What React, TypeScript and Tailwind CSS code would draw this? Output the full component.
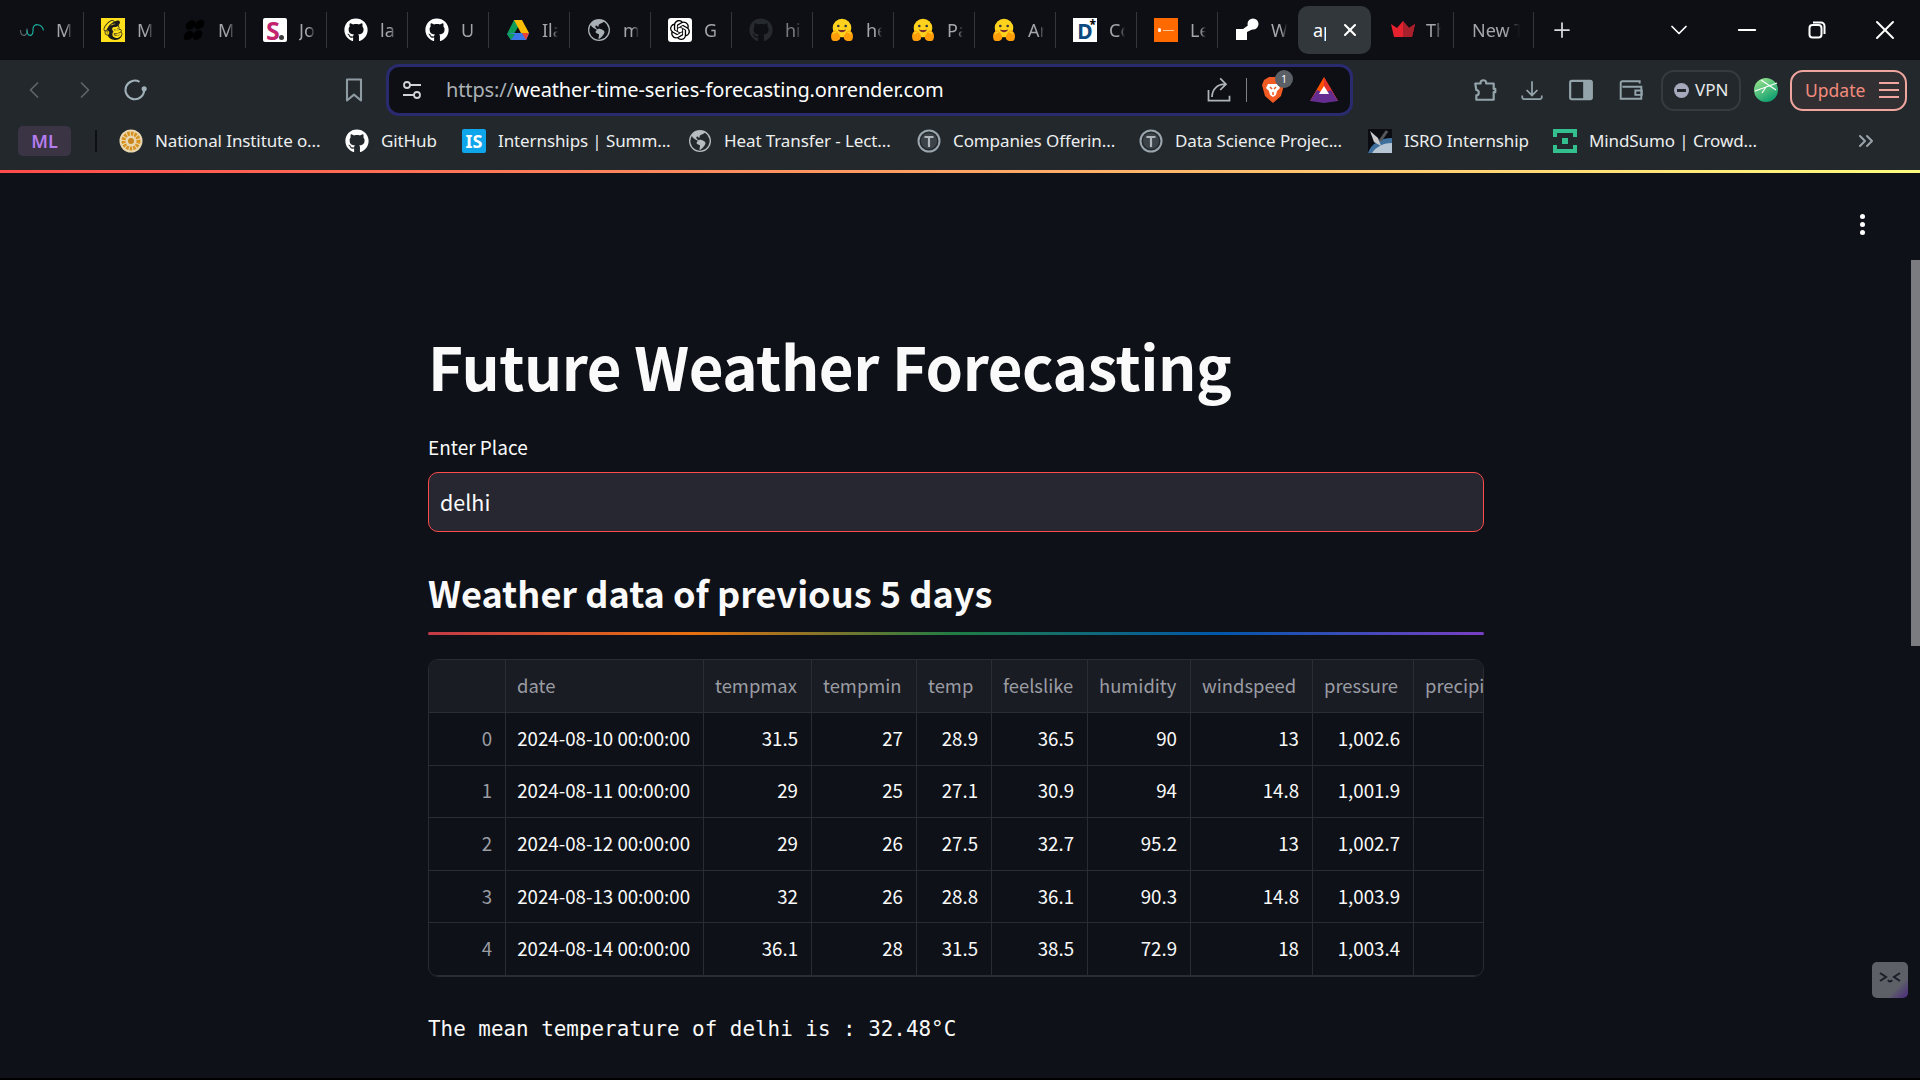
import type { ReactNode } from "react";
import { FaGithub } from "react-icons/fa";
import { SiMailchimp, SiOpenai } from "react-icons/si";
import { BsGlobeAmericas } from "react-icons/bs";
import { ChevronDown, ChevronLeft, ChevronRight, ChevronsRight, Minus, Plus, X } from "lucide-react";

const uiFont = "font-['Noto_Sans',sans-serif]";
const appFont = "font-['Noto_Sans_CJK_SC','Noto_Sans',sans-serif]";

function Hug() {
  return (
    <svg viewBox="0 0 24 24" className="h-6 w-6">
      <circle cx="12" cy="10" r="9.300" fill="#ffd21e" />
      <path d="M1 18c0-3 2-5 4-5.500 2 .5 4 3 5 5.500 1 2.500-1 5-4 5H4c-2 0-3-2-3-5z" fill="#ff9d0b" />
      <path d="M23 18c0-3-2-5-4-5.500-2 .5-4 3-5 5.500-1 2.500 1 5 4 5h2c2 0 3-2 3-5z" fill="#ff9d0b" />
      <path d="M3 16c1-1.500 2.500-2 3.500-1.500M21 16c-1-1.500-2.500-2-3.500-1.500" stroke="#ffd21e" strokeWidth="1.500" fill="none" />
      <circle cx="8.300" cy="8" r="1.300" fill="#32343d" />
      <circle cx="15.700" cy="8" r="1.300" fill="#32343d" />
      <path d="M8 11.500c1 3.500 7 3.500 8 0-2.500.8-5.500.8-8 0z" fill="#7a2a2a" />
    </svg>
  );
}

function TCircle() {
  return (
    <svg viewBox="0 0 24 24" className="h-6 w-6" fill="none">
      <circle cx="12" cy="12" r="10.500" stroke="#9aa5ad" strokeWidth="2" />
      <circle cx="12" cy="12" r="8" fill="#3c4348" />
      <path d="M7.500 8h9M12 8v10" stroke="#aeb6bb" strokeWidth="2.200" />
    </svg>
  );
}

const tabs: { icon: ReactNode; label: string; dim?: boolean }[] = [
  {
    label: "M",
    icon: (
      <svg viewBox="0 0 24 12" className="h-3 w-6" fill="none" strokeWidth="1.100">
        <path d="M.5 6c0 7 6.500 7 6.500 1V4.500" stroke="#5f6a70" />
        <path d="M7 6c0 7 6 7 6 1V5c0-6 9-6 10.500 1.500" stroke="#19b5a5" />
      </svg>
    ),
  },
  {
    label: "M",
    icon: (
      <span className="flex h-6 w-6 items-center justify-center bg-[#ffe01b]">
        <SiMailchimp className="h-5 w-5 text-[#1c1c1c]" />
      </span>
    ),
  },
  {
    label: "M",
    icon: (
      <svg viewBox="0 0 24 24" className="h-6 w-6" fill="#000">
        <ellipse cx="8.500" cy="7" rx="5.500" ry="4" transform="rotate(-45 8.500 7)" />
        <ellipse cx="17.500" cy="6.500" rx="5.500" ry="4" transform="rotate(-45 17.500 6.500)" />
        <ellipse cx="6.500" cy="17.500" rx="5.500" ry="4" transform="rotate(-45 6.500 17.500)" />
        <ellipse cx="15.500" cy="17" rx="5.500" ry="4" transform="rotate(-45 15.500 17)" />
      </svg>
    ),
  },
  {
    label: "Jo",
    icon: (
      <span className={`relative flex h-6 w-6 items-center justify-center rounded-[2px] bg-white pr-[4px] text-[25px] leading-none font-bold text-[#c2246e] ${uiFont}`}>
        S
        <span className="absolute right-[3px] bottom-[2px] h-[5px] w-[5px] rounded-full bg-[#3c3c3c]" />
      </span>
    ),
  },
  { label: "la", icon: <FaGithub className="h-6 w-6 text-white" /> },
  { label: "U", icon: <FaGithub className="h-6 w-6 text-white" /> },
  {
    label: "Ila",
    icon: (
      <svg viewBox="0 0 24 22" className="h-6 w-6">
        <path d="M8 1h8l-8 14H1z" fill="#0f9d58" />
        <path d="M16 1l7 13h-8L8 1z" fill="#fbbc04" />
        <path d="M1 15l4 6h15l3-7H8z" fill="#4285f4" />
        <path d="M8 14.500h15L20 21H5z" fill="#3b78e7" />
        <path d="M1 15l4 6 4-6z" fill="#0f9d58" />
        <path d="M16 14h7l-3 7z" fill="#ea4335" />
      </svg>
    ),
  },
  { label: "m", icon: <BsGlobeAmericas className="h-[22px] w-[22px] text-[#a8b0b5]" /> },
  {
    label: "G",
    icon: (
      <span className="flex h-6 w-6 items-center justify-center rounded-[3px] bg-white">
        <SiOpenai className="h-5 w-5 text-black" />
      </span>
    ),
  },
  { label: "hi", dim: true, icon: <FaGithub className="h-6 w-6 text-[#26292e]" /> },
  { label: "he", icon: <Hug /> },
  { label: "Pa", icon: <Hug /> },
  { label: "Ar", icon: <Hug /> },
  {
    label: "Cc",
    icon: (
      <span className={`relative flex h-6 w-6 items-center justify-center bg-white pt-[2px] text-[21px] leading-none font-bold text-[#0b4a80] ${uiFont}`}>
        D<span className="absolute top-[1px] right-[1px] text-[12px] leading-none font-bold text-black">*</span>
      </span>
    ),
  },
  {
    label: "Le",
    icon: (
      <span className="flex h-6 w-6 items-center justify-center bg-[#ff6a00]">
        <span className="h-[4px] w-[3px] rounded-full bg-white" />
        <span className="ml-[2px] h-px w-[11px] bg-[#ffc89a]" />
      </span>
    ),
  },
  {
    label: "W",
    icon: (
      <svg viewBox="0 0 24 24" className="h-6 w-6" fill="#fff">
        <circle cx="18" cy="6" r="5.500" />
        <path d="M1 11h7l7-5 3 5-6 3v8H1z" />
      </svg>
    ),
  },
];

const toolbarIconClass = "h-[26px] w-[26px] text-[#93a5ab]";

const bookmarks: { icon: ReactNode; label: string; width: string }[] = [
  {
    label: "National Institute o...",
    width: "w-[226px]",
    icon: (
      <svg viewBox="0 0 24 24" className="h-6 w-6">
        <circle cx="12" cy="12" r="11.500" fill="#e8d7b0" />
        <circle cx="12" cy="12" r="7.500" fill="none" stroke="#d8931f" strokeWidth="4" strokeDasharray="2.500 1" />
        <circle cx="12" cy="12" r="3" fill="#c8861c" />
      </svg>
    ),
  },
  { label: "GitHub", width: "w-[117px]", icon: <FaGithub className="h-6 w-6 text-white" /> },
  {
    label: "Internships | Summ...",
    width: "w-[226px]",
    icon: (
      <span className={`flex h-6 w-6 items-center justify-center rounded-[2px] bg-[#0ea5ea] text-[18px] leading-none font-bold text-white ${uiFont}`}>
        IS
      </span>
    ),
  },
  {
    label: "Heat Transfer - Lect...",
    width: "w-[229px]",
    icon: <BsGlobeAmericas className="h-[22px] w-[22px] text-[#b6bcc0]" />,
  },
  { label: "Companies Offerin...", width: "w-[222px]", icon: <TCircle /> },
  { label: "Data Science Projec...", width: "w-[229px]", icon: <TCircle /> },
  {
    label: "ISRO Internship",
    width: "w-[185px]",
    icon: (
      <svg viewBox="0 0 24 24" className="h-6 w-6">
        <rect width="24" height="24" fill="#0a0c12" />
        <path d="M0 24c3-9 12-15 24-15v15z" fill="#3f6f9c" />
        <path d="M4 24c3-5 10-10 20-10v10z" fill="#b7c6d4" />
        <path d="M2 2l8 7 3 8-7-4z" fill="#c8cacc" />
        <path d="M12 12l7-10" stroke="#54575c" strokeWidth="3" />
      </svg>
    ),
  },
  {
    label: "MindSumo | Crowd...",
    width: "w-[270px]",
    icon: (
      <svg viewBox="0 0 24 24" className="h-6 w-6" fill="none">
        <path d="M22 8V2H2v6M2 16v6h20v-6" stroke="#34c08e" strokeWidth="4" />
        <rect x="9" y="9" width="6" height="6" fill="#34c08e" />
      </svg>
    ),
  },
];

const columns = [
  { name: "", width: "w-[77px]" },
  { name: "date", width: "w-[198px]" },
  { name: "tempmax", width: "w-[108px]" },
  { name: "tempmin", width: "w-[105px]" },
  { name: "temp", width: "w-[75px]" },
  { name: "feelslike", width: "w-[96px]" },
  { name: "humidity", width: "w-[103px]" },
  { name: "windspeed", width: "w-[122px]" },
  { name: "pressure", width: "w-[101px]" },
  { name: "precipi", width: "w-[72px]" },
];

const rows = [
  ["0", "2024-08-10 00:00:00", "31.5", "27", "28.9", "36.5", "90", "13", "1,002.6", ""],
  ["1", "2024-08-11 00:00:00", "29", "25", "27.1", "30.9", "94", "14.8", "1,001.9", ""],
  ["2", "2024-08-12 00:00:00", "29", "26", "27.5", "32.7", "95.2", "13", "1,002.7", ""],
  ["3", "2024-08-13 00:00:00", "32", "26", "28.8", "36.1", "90.3", "14.8", "1,003.9", ""],
  ["4", "2024-08-14 00:00:00", "36.1", "28", "31.5", "38.5", "72.9", "18", "1,003.4", ""],
];

function TabBar() {
  return (
    <div className={`flex h-[60px] shrink-0 items-center bg-[#0d0f14] pl-[3px] ${uiFont}`}>
      {tabs.map((tab, i) => (
        <div key={i} className="flex h-full w-[81px] shrink-0 items-center py-3">
          <div className={`flex h-full w-full items-center pl-[17px] ${i === 15 ? "" : "border-r border-[#33373b]"}`}>
            <span className="flex w-6 shrink-0 justify-center">{tab.icon}</span>
            <span
              className={`ml-[12px] w-[16px] overflow-hidden text-[18px] whitespace-nowrap [mask-image:linear-gradient(to_right,black_65%,transparent)] ${
                tab.dim ? "text-[#777b80]" : "text-[#a3a6aa]"
              }`}
            >
              {tab.label}
            </span>
          </div>
        </div>
      ))}
      <div className="-ml-px flex h-12 w-[73px] shrink-0 items-center rounded-[10px] bg-[#31373b] pl-[15px]">
        <span className="w-[13px] overflow-hidden text-[18px] text-white">ap</span>
        <X className="ml-[14px] h-[20px] w-[20px] text-white" strokeWidth={2.5} />
      </div>
      <div className="ml-[2px] flex h-full w-[81px] shrink-0 items-center py-3">
        <div className="flex h-full w-full items-center border-r border-[#33373b] pl-[18px]">
          <svg viewBox="0 0 24 18" className="h-[18px] w-6">
            <path d="M0 3l6 4 6-7 6 7 6-4-3 13H3z" fill="#e8212e" />
            <path d="M12 0l6 7 6-4-3 13h-9z" fill="#a8202c" />
          </svg>
          <span className="ml-[11px] w-[15px] overflow-hidden text-[18px] whitespace-nowrap text-[#a3a6aa] [mask-image:linear-gradient(to_right,black_65%,transparent)]">
            Th
          </span>
        </div>
      </div>
      <div className="flex h-full w-[80px] shrink-0 items-center py-3">
        <div className="flex h-full w-full items-center border-r border-[#33373b] pl-[18px]">
          <span className="w-[48px] overflow-hidden text-[18px] whitespace-nowrap text-[#a3a6aa] [mask-image:linear-gradient(to_right,black_70%,transparent)]">
            New T
          </span>
        </div>
      </div>
      <Plus className="ml-[16px] h-6 w-6 text-[#d8dadc]" strokeWidth={1.75} />
      <ChevronDown className="ml-[91px] h-7 w-7 text-white" strokeWidth={1.5} />
      <Minus className="ml-[40px] h-7 w-7 text-white" strokeWidth={1.75} />
      <svg viewBox="0 0 18 18" className="ml-[47px] h-[18px] w-[18px]" fill="none" stroke="#fff" strokeWidth="2">
        <rect x="1.500" y="4" width="12" height="12.500" rx="3" />
        <path d="M5 1.500h8a3.500 3.500 0 0 1 3.500 3.500v8" />
      </svg>
      <X className="ml-[43px] h-8 w-8 text-white" strokeWidth={1.5} />
    </div>
  );
}

function Toolbar() {
  return (
    <div className={`flex h-[60px] shrink-0 items-center bg-[#23282c] pl-[20px] ${uiFont}`}>
      <ChevronLeft className="h-7 w-7 text-[#5d666c]" strokeWidth={1.5} />
      <ChevronRight className="ml-[23px] h-7 w-7 text-[#5d666c]" strokeWidth={1.5} />
      <svg viewBox="0 0 24 24" className="ml-[23px] h-[28px] w-[28px]" fill="none">
        <path d="M19 12a8 8 0 1 1-4-7" stroke="#9fb0b8" strokeWidth="1.800" />
        <circle cx="19" cy="11" r="2.200" fill="#9fb0b8" />
      </svg>
      <svg viewBox="0 0 24 24" className="ml-[190px] h-7 w-7" fill="none">
        <path d="M6 3h12v18l-6-5-6 5z" stroke="#8f9ba3" strokeWidth="1.800" strokeLinejoin="round" />
      </svg>
      <div className="ml-[18px] flex h-[52px] w-[967px] items-center rounded-[13px] border-[3px] border-[#2a2a6e] bg-[#0d0f14] pl-[11px]">
        <svg viewBox="0 0 24 24" className="h-6 w-6" fill="none" stroke="#d0d4d6" strokeWidth="1.800">
          <circle cx="7" cy="7" r="3" />
          <path d="M10 7h11M3 17h11" />
          <circle cx="17" cy="17" r="3" />
        </svg>
        <span className="ml-[22px] text-[20px] tracking-[-0.13px] whitespace-nowrap text-white">
          <span className="text-[#aab0b4]">https://</span>weather-time-series-forecasting.onrender.com
        </span>
        <svg viewBox="0 0 24 24" className="ml-auto h-7 w-7" fill="none" stroke="#aeb4b8" strokeWidth="1.500">
          <path d="M3 12v9h18v-4M6 18c0-7 5-11 11-11M13 2l5 5-5 5" />
        </svg>
        <span className="ml-[13px] h-[24px] w-px bg-[#7c8286]" />
        <div className="relative ml-[14px]">
          <svg viewBox="0 0 24 28" className="h-7 w-6">
            <path d="M3 4l5-3h8l5 3 2 5-3 11-8 7-8-7L1 9z" fill="#f15a22" />
            <path d="M7 8h10l2 4-3 3-1 4-3 2-3-2-1-4-3-3z" fill="#fff" />
            <path d="M9 11l2 2M15 11l-2 2M12 16v3" stroke="#f15a22" strokeWidth="1.500" />
          </svg>
          <span className="absolute -top-[6px] left-[14px] flex h-[18px] w-[18px] items-center justify-center rounded-full bg-[#5b5f66] text-[10px] text-white">
            1
          </span>
        </div>
        <svg viewBox="0 0 28 26" className="ml-[25px] mr-[12px] h-[26px] w-[28px]">
          <path d="M14 0l14 24H0z" fill="#ff5000" />
          <path d="M14 0l14 24-14-8z" fill="#e0312f" />
          <path d="M0 24l7-11 7 3 7-3 7 11-14 2z" fill="#662d91" />
          <path d="M14 9l5 8H9z" fill="#fff" />
        </svg>
      </div>
      <svg viewBox="0 0 24 24" className={`ml-[119px] ${toolbarIconClass}`} fill="none" stroke="currentColor" strokeWidth="2">
        <path d="M3 6h5c-1-4 6-4 5 0h7v5h1.500v3H20v7H4v-4c3 0 3-5 0-5z" strokeLinejoin="round" />
      </svg>
      <svg viewBox="0 0 24 24" className={`ml-[21px] ${toolbarIconClass}`} fill="none" stroke="currentColor" strokeWidth="1.600">
        <path d="M12 4v12M7 12l5 5 5-5M3 17v2a1.500 1.500 0 0 0 1.500 1.500h15A1.500 1.500 0 0 0 21 19v-2" />
      </svg>
      <svg viewBox="0 0 24 24" className={`ml-[23px] ${toolbarIconClass}`}>
        <rect x="2" y="3.500" width="20" height="17" rx="1.500" fill="none" stroke="currentColor" strokeWidth="2" />
        <rect x="14" y="3.500" width="8" height="17" fill="currentColor" />
      </svg>
      <svg viewBox="0 0 24 24" className={`ml-[24px] ${toolbarIconClass}`} fill="none" stroke="currentColor" strokeWidth="1.800">
        <path d="M20 6V4H4a1.500 1.500 0 0 0-1.500 1.500V20h19V9H4M16 12.500h6v4h-6z" />
      </svg>
      <div className="ml-[17px] flex h-[41px] w-[80px] items-center rounded-[13px] border-2 border-[#343c40] pl-[11px]">
        <span className="flex h-[15px] w-[15px] items-center justify-center rounded-full bg-[#a6a8bb]">
          <span className="h-[3px] w-[9px] bg-[#23282c]" />
        </span>
        <span className="ml-[6px] text-[17px] text-[#e8eaeb]">VPN</span>
      </div>
      <svg viewBox="0 0 24 24" className="ml-[13px] h-[24px] w-[24px]">
        <defs>
          <linearGradient id="planet" x1="0" y1="0" x2="0.6" y2="1">
            <stop offset="0" stopColor="#a5e88e" />
            <stop offset="1" stopColor="#12a070" />
          </linearGradient>
        </defs>
        <circle cx="12" cy="12" r="12" fill="url(#planet)" />
        <path d="M1 13L23 5M7 2l15 10M12 9l-4 6" stroke="#fff" strokeWidth="1.200" />
      </svg>
      <div className="ml-[12px] flex h-[41px] w-[117px] items-center rounded-[13px] border-2 border-[#f0a69e] bg-[#322f33] pl-[13px]">
        <span className="text-[17.500px] text-[#f28b7c]">Update</span>
        <span className="ml-[14px] flex w-[20px] flex-col gap-[5px]">
          <span className="h-[2px] bg-[#f0a69e]" />
          <span className="h-[2px] bg-[#f0a69e]" />
          <span className="h-[2px] bg-[#f0a69e]" />
        </span>
      </div>
    </div>
  );
}

function BookmarkBar() {
  return (
    <div className={`flex h-[50px] shrink-0 items-center bg-[#23282c] pb-[8px] pl-[18px] ${uiFont}`}>
      <span className="flex h-[30px] w-[53px] items-center justify-center rounded-[5px] bg-[#3a3444] text-[18px] font-semibold text-[#b57cf0]">
        ML
      </span>
      <span className="ml-[24px] h-[22px] w-[2px] bg-[#0d0f14]" />
      <div className="ml-[22px] flex items-center">
        {bookmarks.map((b) => (
          <div key={b.label} className={`flex shrink-0 items-center ${b.width}`}>
            <span className="flex w-6 shrink-0 justify-center">{b.icon}</span>
            <span className="ml-3 text-[17px] tracking-[-0.1px] whitespace-nowrap text-[#eceeef]">{b.label}</span>
          </div>
        ))}
      </div>
      <ChevronsRight className="ml-[31px] h-6 w-6 text-[#9ba4ab]" strokeWidth={2} />
    </div>
  );
}

function DataTable() {
  return (
    <div className="mt-[24px] h-[318px] overflow-hidden rounded-[10px] border border-[#2a2c32] text-[18.700px]">
      <div className="flex h-[53px] bg-[#1a1c24] text-[18.400px] text-[#9a9ca3]">
        {columns.map((col) => (
          <div
            key={col.name}
            className={`flex shrink-0 items-center overflow-hidden border-r border-b border-[#2b2d34] pl-[11px] whitespace-nowrap ${col.width}`}
          >
            {col.name}
          </div>
        ))}
      </div>
      {rows.map((row) => (
        <div key={row[0]} className="flex h-[52.600px] text-[#fafafa]">
          {row.map((cell, i) => (
            <div
              key={i}
              className={`flex shrink-0 items-center justify-end border-r border-b border-[#2a2c32] pr-[13px] pb-[2px] whitespace-nowrap ${columns[i].width} ${
                i === 0 ? "text-[#9a9ca3]" : ""
              }`}
            >
              {cell}
            </div>
          ))}
        </div>
      ))}
    </div>
  );
}

export default function App() {
  return (
    <div className="flex h-screen w-full flex-col overflow-hidden bg-black">
      <TabBar />
      <Toolbar />
      <BookmarkBar />
      <div className="h-[3px] shrink-0 bg-[linear-gradient(90deg,#ff4b4b,#fffd80)]" />
      <main className={`relative min-h-0 flex-1 bg-[#0e1117] text-[20px] text-[#fafafa] ${appFont}`}>
        <div className="ml-[428px] w-[1056px] pt-[152px]">
          <h1 className="text-[60px] leading-[80px] font-bold tracking-[-0.46px]">Future Weather Forecasting</h1>
          <div className="mt-[28px] text-[19px] leading-[28px]">Enter Place</div>
          <div className="mt-[11px] flex h-[60px] items-center rounded-[10px] border border-[#ff4b4b] bg-[#262730] pl-[11px] text-[21.500px]">
            delhi
          </div>
          <h2 className="mt-[30px] text-[36.100px] leading-[60px] font-semibold">Weather data of previous 5 days</h2>
          <div className="mt-[10px] h-[3px] rounded-sm bg-[linear-gradient(to_right,#c43a48,#e8700f,#1f7d45,#0057ab,#7a3fc4)]" />
          <DataTable />
          <p className="mt-[38px] font-['DejaVu_Sans_Mono',monospace] text-[20.900px] leading-[28px] text-[#fafafa]">
            The mean temperature of delhi is : 32.48°C
          </p>
        </div>
        <div className="absolute top-[41px] left-[1860px] flex flex-col gap-[3px]">
          <span className="h-[5px] w-[5px] rounded-full bg-white" />
          <span className="h-[5px] w-[5px] rounded-full bg-white" />
          <span className="h-[5px] w-[5px] rounded-full bg-white" />
        </div>
        <div className="absolute top-[87px] right-0 h-[386px] w-[9px] bg-[#7b7c80]" />
        <div className="absolute top-[789px] left-[1872px] flex h-9 w-9 items-center justify-center rounded-[5px] bg-[linear-gradient(135deg,#5e6068_70%,#4a2a80)]">
          <svg viewBox="0 0 36 36" className="h-9 w-9" fill="none" stroke="#1b1d28" strokeWidth="2">
            <path d="M8 11l6 4-6 4M28 11l-6 4 6 4M16 18c1 2 3 2 4 0" />
          </svg>
        </div>
      </main>
      <div className="h-[2px] shrink-0 bg-black" />
    </div>
  );
}
